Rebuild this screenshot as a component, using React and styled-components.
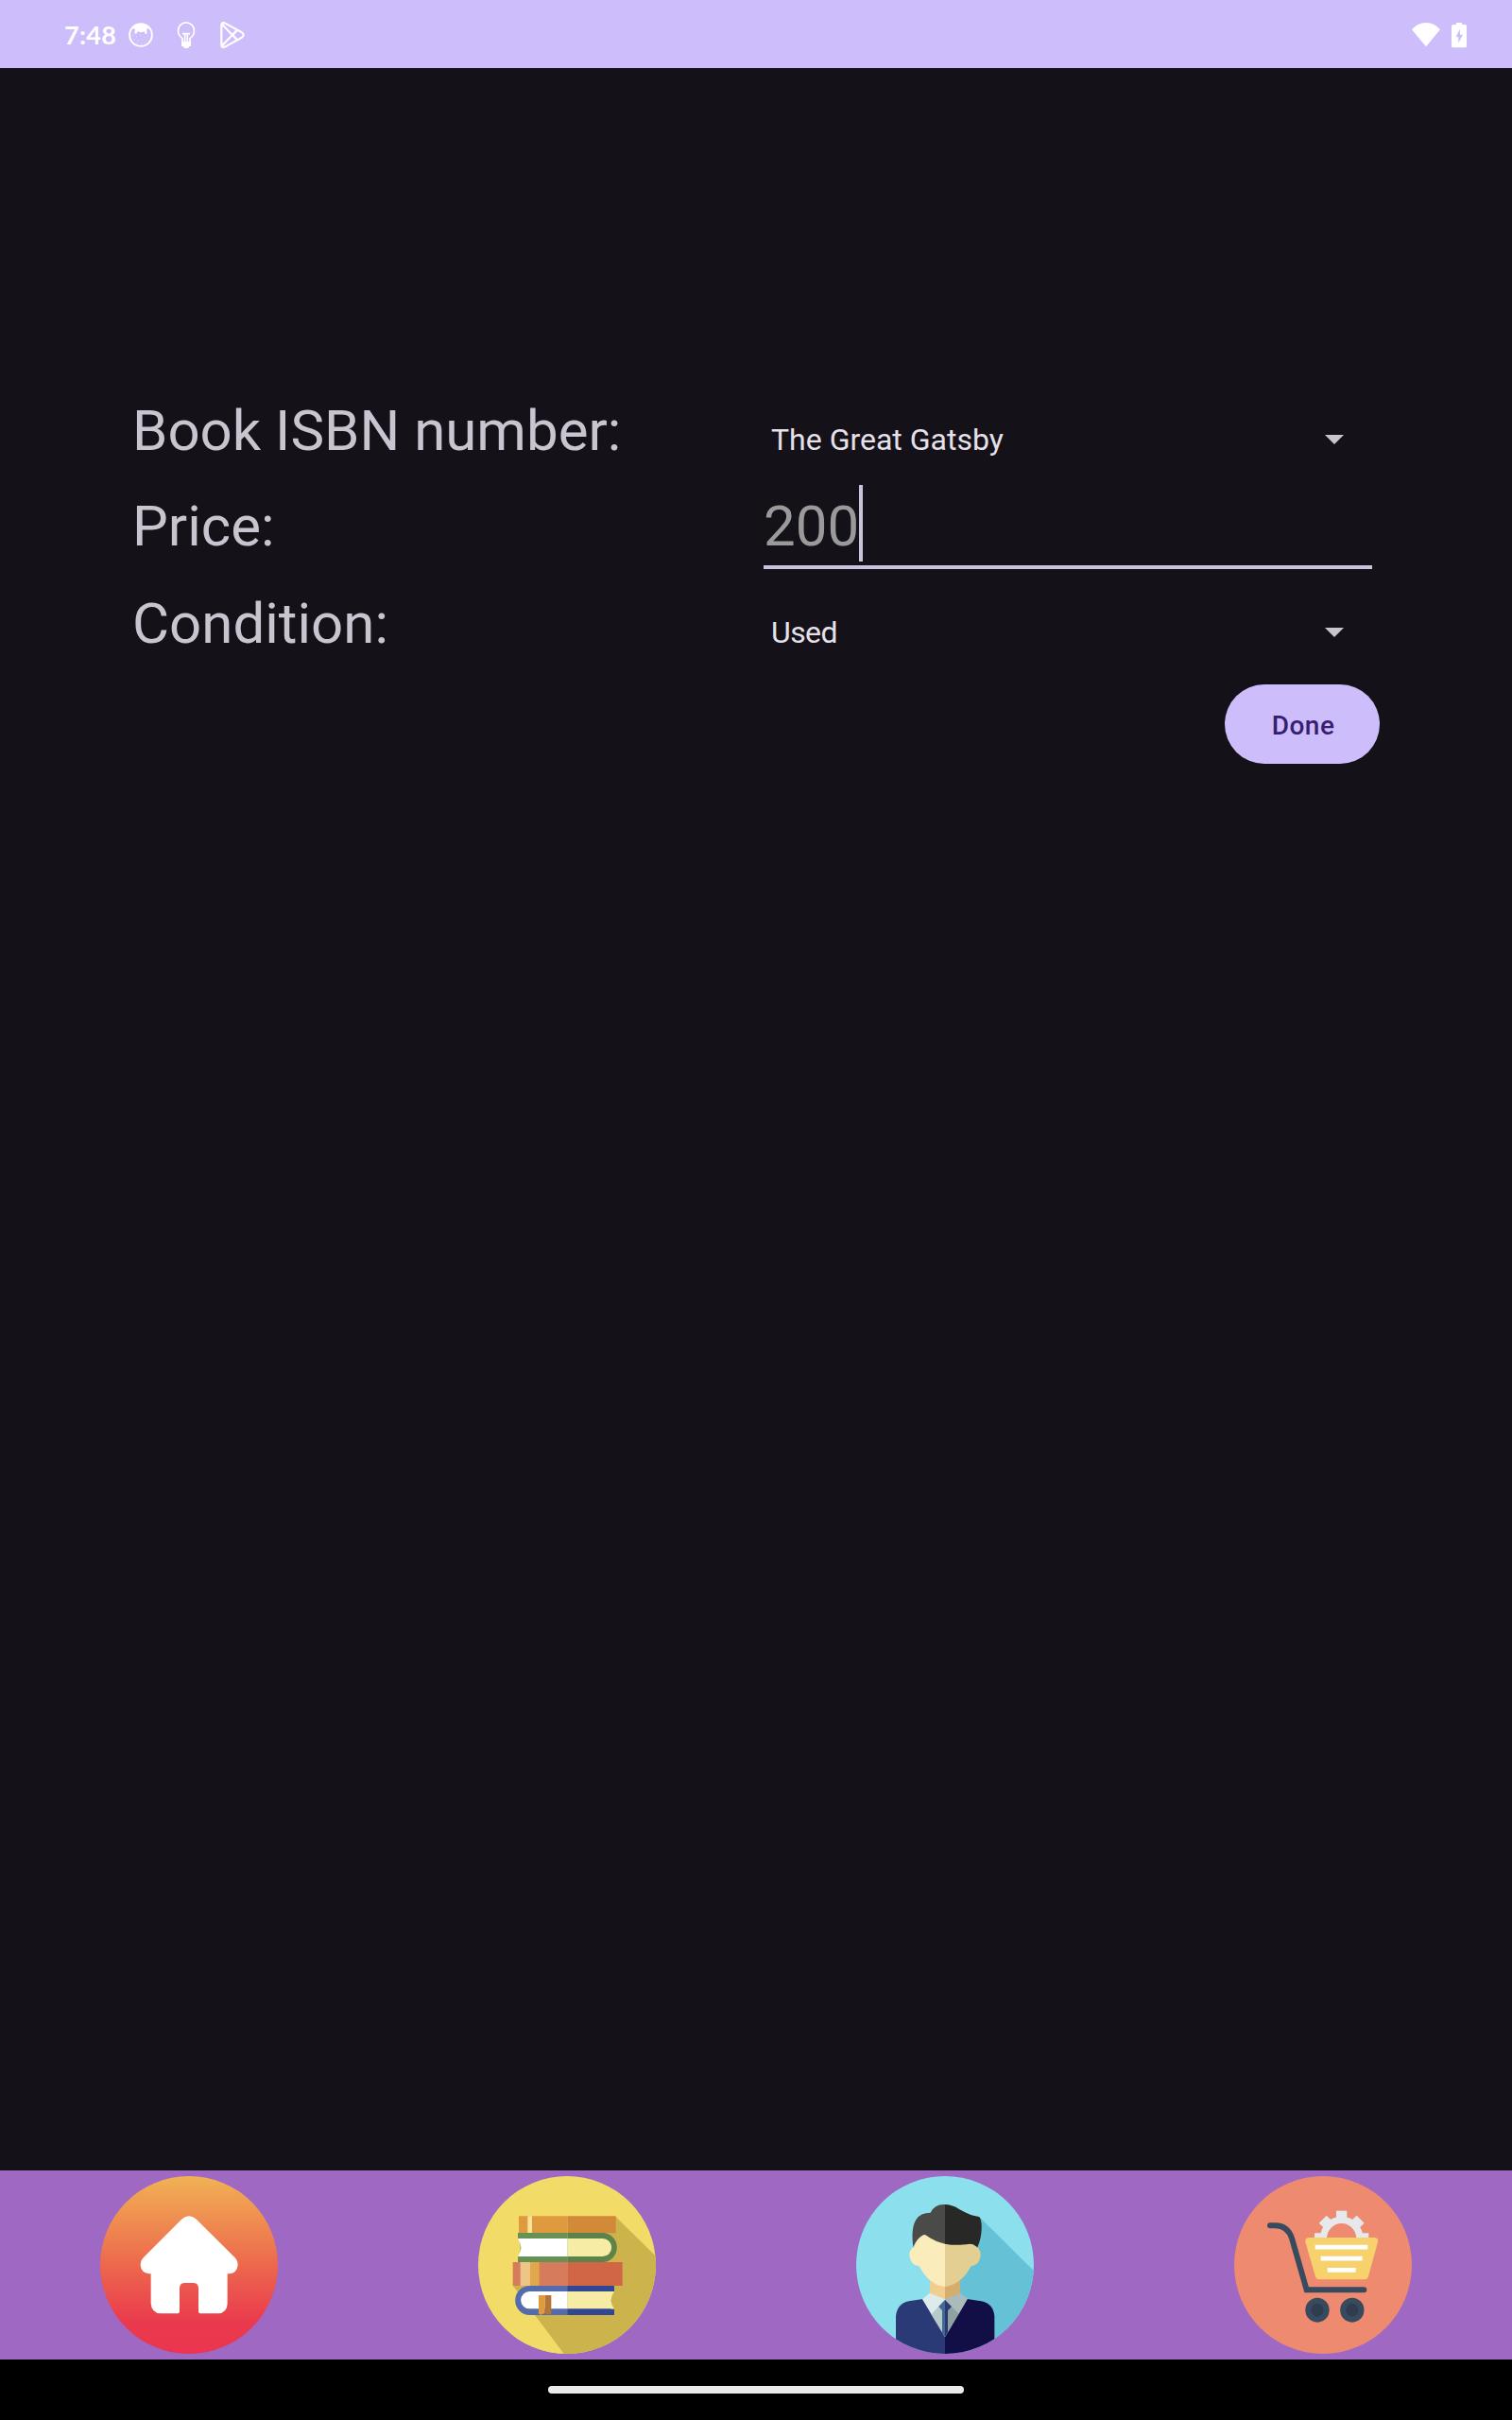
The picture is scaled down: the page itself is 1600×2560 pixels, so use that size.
import React from "react";
import styled, { createGlobalStyle } from "styled-components";

const GlobalStyle = createGlobalStyle`
  *, *::before, *::after { box-sizing: border-box; }
  body { margin: 0; background: #141218; font-family: Roboto, "Liberation Sans", sans-serif; }
`;

const Screen = styled.div`
  display: flex;
  flex-direction: column;
  width: 1600px;
  height: 2560px;
  background: #141218;
`;

const StatusBar = styled.header`
  display: flex;
  align-items: center;
  justify-content: space-between;
  height: 72px;
  padding: 2px 47px 0 68px;
  background: #cdbdfb;
  color: #fff;
`;

const StatusGroup = styled.div`
  display: flex;
  align-items: center;
  gap: ${(p) => p.$gap}px;
`;

const Clock = styled.time`
  width: 54px;
  margin-right: -11px;
  font: 700 27px/32px Lato, Roboto, sans-serif;
  letter-spacing: 0.3px;
  white-space: nowrap;
`;

const Glyph = styled.svg`
  display: block;
  flex: none;
  width: ${(p) => p.$w}px;
  height: 30px;
`;

const Content = styled.main`
  flex: 1;
  padding: 342px 140px 0;
`;

const Form = styled.form`
  display: flex;
  flex-direction: column;
`;

const Row = styled.div`
  display: grid;
  grid-template-columns: 660px 660px;
  height: 102px;
`;

const Label = styled.label`
  color: #cac4d0;
  font-size: 60px;
  line-height: ${(p) => p.$line || 83}px;
  white-space: nowrap;
`;

const Spinner = styled.div`
  display: flex;
  align-items: center;
  justify-content: space-between;
  padding: 0 38px 0 16px;
  color: #e6e0e9;
  font-size: 32px;
  letter-spacing: ${(p) => p.$tracking || 0}px;
`;

const Arrow = styled.span`
  width: 20px;
  height: 10px;
  background: #cac4d0;
  clip-path: polygon(0 0, 100% 0, 50% 100%);
`;

const PriceField = styled.div`
  display: flex;
  align-items: flex-start;
  height: 86px;
  margin: 0 8px;
  border-bottom: 4px solid #cac3dc;
  color: #9a9a9a;
  font-size: 60px;
  line-height: 81px;
`;

const Caret = styled.span`
  width: 4px;
  height: 81px;
  margin-top: -3px;
  background: #cac3dc;
`;

const Actions = styled.div`
  display: flex;
  justify-content: flex-end;
  padding-top: 4px;
`;

const DoneButton = styled.button`
  width: 164px;
  height: 84px;
  padding: 4px 0 0 2px;
  border: 0;
  border-radius: 42px;
  background: #cdbdfb;
  color: #381e72;
  font: 500 28px/34px Roboto, sans-serif;
  letter-spacing: 0.5px;
`;

const NavBar = styled.nav`
  display: grid;
  grid-template-columns: repeat(4, 1fr);
  place-items: center;
  height: 200px;
  background: #9f68c2;
`;

const NavIcon = styled.svg`
  display: block;
  width: 188px;
  height: 188px;
`;

const GestureBar = styled.footer`
  display: flex;
  align-items: center;
  justify-content: center;
  height: 64px;
  background: #000;
`;

const GestureHandle = styled.div`
  width: 440px;
  height: 8px;
  border-radius: 4px;
  background: #ebebeb;
`;

const FaceIcon = () => (
  <Glyph $w={26} viewBox="288 66 78 90">
    <circle cx="327" cy="111" r="35.5" fill="none" stroke="#fff" strokeWidth="6" />
    <path fill="#fff" d="M300 88Q310 76 327 75Q344 76 354 88L346 93L347 107L341 108L338 100Q327 105 317 100L313 107L307 106L309 94Z" />
    <path
      stroke="#fff"
      strokeWidth="3"
      strokeLinecap="round"
      opacity=".75"
      d="M303 113h.1M314 117h.1M325 112h.1M337 118h.1M349 114h.1M308 126h.1M320 128h.1M332 127h.1M345 129h.1M315 137h.1M328 138h.1M339 136h.1"
    />
  </Glyph>
);

const BulbIcon = () => (
  <Glyph $w={20} viewBox="441 66 60 90">
    <path fill="none" stroke="#fff" strokeWidth="5" d="M459 134V122C450 116 445.500 107 445.500 97A25.500 25.500 0 0 1 496.500 97C496.500 107 492 116 483 122V134" />
    <path fill="#fff" d="M456 132H486V147H480V151Q471 156 462 151V147H456Z" />
    <path fill="none" stroke="#fff" strokeWidth="5" d="M459 107H483M467 107V133M475 107V133" />
  </Glyph>
);

const PlayIcon = () => (
  <Glyph $w={28} viewBox="573 66 84 90">
    <g fill="none" stroke="#fff" strokeWidth="6.5" strokeLinejoin="round">
      <path d="M580 79Q581 69 592 74L645 103Q655 111 645 119L592 148Q581 153 580 143Z" />
      <path d="M582 77L629 126M582 145L629 96M630 96L616 111L630 126" />
    </g>
  </Glyph>
);

const WifiIcon = () => (
  <Glyph $w={32} viewBox="99 66 96 90">
    <path fill="#fff" d="M147 148L102 94Q121 72 147 72Q173 72 192 94Z" />
  </Glyph>
);

const BatteryIcon = () => (
  <Glyph $w={18} viewBox="225 66 54 90">
    <path
      fill="#fff"
      fillRule="evenodd"
      d="M243 72H261V78H271Q276 78 276 83V146Q276 151 271 151H233Q228 151 228 146V83Q228 78 233 78H243ZM254 92L242 118H250V136L264 110H255Z"
    />
  </Glyph>
);

const HomeIcon = () => (
  <NavIcon viewBox="48 51 564 564">
    <defs>
      <linearGradient id="homeFill" x1="0" y1="0" x2="0" y2="1">
        <stop offset="0" stopColor="#f1b254" />
        <stop offset=".5" stopColor="#ed684d" />
        <stop offset=".83" stopColor="#ea394d" />
        <stop offset="1" stopColor="#ea354e" />
      </linearGradient>
    </defs>
    <circle cx="330" cy="333" r="282" fill="url(#homeFill)" />
    <path
      fill="#fff"
      d="M308 187Q330 169 352 187L476 310Q485 319 485 334Q482 359 459 361H452V455Q451 485 422 487H368Q360 487 360 479V406Q359 390 343 390H317Q301 390 300 406V479Q300 487 292 487H240Q211 485 209 455V361H203Q178 358 176 334Q176 319 185 310Z"
    />
  </NavIcon>
);

const BooksIcon = () => (
  <NavIcon viewBox="48 51 564 564">
    <defs>
      <clipPath id="booksClip"><circle cx="330" cy="333" r="282" /></clipPath>
    </defs>
    <g clipPath="url(#booksClip)">
      <path fill="#f2dc67" d="M48 51H612V615H48Z" />
      <path fill="#cdb34b" d="M485 180L640 333V640H339L158 398Z" />
      <path fill="#f2dc67" d="M158 455L318 618H158Z" />
      <path fill="#de9a3d" d="M177 178H332V232H177Z" />
      <path fill="#d28938" d="M332 178H485V232H332Z" />
      <path fill="#f6e39a" d="M205 178H219V232H205Z" />
      <path fill="#679253" d="M174 231H332V324H174Z" />
      <path fill="#5c8349" d="M332 231H442A46.500 46.500 0 0 1 442 324H332Z" />
      <path fill="#f2dc67" d="M173 249H182V306H173Z" />
      <path fill="#fff" d="M174 249H332V306H174Q184 290 184 278Q184 264 174 249Z" />
      <path fill="#f6eca6" d="M332 249H443A28.500 28.500 0 0 1 443 306H332Z" />
      <path fill="#d67b5c" d="M158 324H332V399H158Z" />
      <path fill="#d16647" d="M332 324H506V399H332Z" />
      <path fill="#ecc587" d="M182 324H213V399H182Z" />
      <path fill="#e0a74c" d="M213 324H242V399H213Z" />
      <path fill="#546bae" d="M332 399H212A46.500 46.500 0 0 0 212 492H332Z" />
      <path fill="#304893" d="M331 399H480V492H331Z" />
      <path fill="#cdb34b" d="M470 417H481V473H470Z" />
      <path fill="#fff" d="M332 417H211A27.500 27.500 0 0 0 211 472H332Z" />
      <path fill="#f6eca6" d="M331 417H480Q470 431 470 446Q470 460 480 472H331Z" />
      <path fill="#de9a3d" d="M240 429H260V486L247 491L240 488Z" />
      <path fill="#b57635" d="M260 429H280V488L274 491L260 486Z" />
    </g>
  </NavIcon>
);

const ProfileIcon = () => (
  <NavIcon viewBox="48 51 564 564">
    <defs>
      <clipPath id="profileClip"><circle cx="330" cy="333" r="282" /></clipPath>
    </defs>
    <g clipPath="url(#profileClip)">
      <path fill="#8cdfec" d="M48 51H612V615H48Z" />
      <path fill="#65c1d6" d="M441 182L630 370V620H400L330 380Z" />
      <path fill="#f2ce8e" d="M282 375H330V445H282Z" />
      <path fill="#d5ad6c" d="M330 375H378V445H330Z" />
      <path fill="#fbecbb" d="M330 230H250L232 276Q217 282 217 302Q220 334 248 337Q280 397 330 402Z" />
      <path fill="#e3cf91" d="M330 230H416L430 276Q443 282 443 302Q441 332 413 337Q380 397 330 402Z" />
      <path fill="#4a4a48" d="M330 141Q297 139 284 167Q252 167 239 188Q221 214 229 276Q242 247 261 238Q267 235 276 243Q299 259 330 266Z" />
      <path fill="#282826" d="M330 141Q351 141 374 155Q408 176 438 180Q444 184 446 205Q448 243 433 277L419 268Q411 265 397 268Q360 272 330 266Z" />
      <path fill="#2a3a76" d="M330 620H174V496Q178 456 215 448L260 441L330 562Z" />
      <path fill="#110f45" d="M330 620H487V496Q484 456 445 448L400 441L330 562Z" />
      <path fill="#b8c9ca" d="M308 465L286 490L330 562V443Z" />
      <path fill="#91a1a0" d="M352 465L374 488L330 562V443Z" />
      <path fill="#deebed" d="M282 422L330 442L287 490L258 442Z" />
      <path fill="#abbbbc" d="M378 422L330 442L374 488L402 440Z" />
      <path fill="#436993" d="M330 444L310 465L321 478V548L330 562Z" />
      <path fill="#2a3a76" d="M330 444L351 465L339 478V546L330 562Z" />
    </g>
  </NavIcon>
);

const CartIcon = () => (
  <NavIcon viewBox="48 51 564 564">
    <circle cx="330" cy="333" r="282" fill="#ee8a70" />
    <path fill="none" stroke="#e7e8eb" strokeWidth="22" d="M331 250A58 60 0 0 1 447 250" />
    <g fill="#e7e8eb">
      <path d="M372 161H406V190H372Z" />
      <path d="M341 176L357 191L333 215L317 200Z" />
      <path d="M437 176L461 200L445 215L421 191Z" />
      <path d="M303 232H326V248H303ZM452 232H475V248H452Z" />
    </g>
    <path fill="#f7d16c" d="M285 246H494Q507 248 504 260L474 370Q471 379 462 379H318Q308 379 306 370L274 260Q272 248 285 246Z" />
    <path stroke="#fff" strokeWidth="14" d="M305 276.500H472M323 312.500H455M344 349H434" />
    <path fill="none" stroke="#384b5e" strokeWidth="18" strokeLinecap="round" strokeLinejoin="miter" d="M162 208H179Q218 209 231 248L278 412H460" />
    <g fill="#384b5e">
      <ellipse cx="312" cy="476" rx="38" ry="39" />
      <ellipse cx="422.500" cy="476" rx="38" ry="39" />
    </g>
    <g fill="#303d4f">
      <ellipse cx="312" cy="476" rx="20" ry="21" />
      <ellipse cx="422.500" cy="476" rx="20" ry="21" />
    </g>
  </NavIcon>
);

export default function App() {
  return (
    <Screen>
      <GlobalStyle />
      <StatusBar>
        <StatusGroup $gap={25}>
          <Clock>7:48</Clock>
          <FaceIcon />
          <BulbIcon />
          <PlayIcon />
        </StatusGroup>
        <StatusGroup $gap={10}>
          <WifiIcon />
          <BatteryIcon />
        </StatusGroup>
      </StatusBar>
      <Content>
        <Form>
          <Row>
            <Label>Book ISBN number:</Label>
            <Spinner>The Great Gatsby<Arrow /></Spinner>
          </Row>
          <Row>
            <Label $line={81}>Price:</Label>
            <PriceField>200<Caret /></PriceField>
          </Row>
          <Row>
            <Label>Condition:</Label>
            <Spinner $tracking={-0.6}>Used<Arrow /></Spinner>
          </Row>
          <Actions>
            <DoneButton type="button">Done</DoneButton>
          </Actions>
        </Form>
      </Content>
      <NavBar>
        <HomeIcon />
        <BooksIcon />
        <ProfileIcon />
        <CartIcon />
      </NavBar>
      <GestureBar>
        <GestureHandle />
      </GestureBar>
    </Screen>
  );
}
